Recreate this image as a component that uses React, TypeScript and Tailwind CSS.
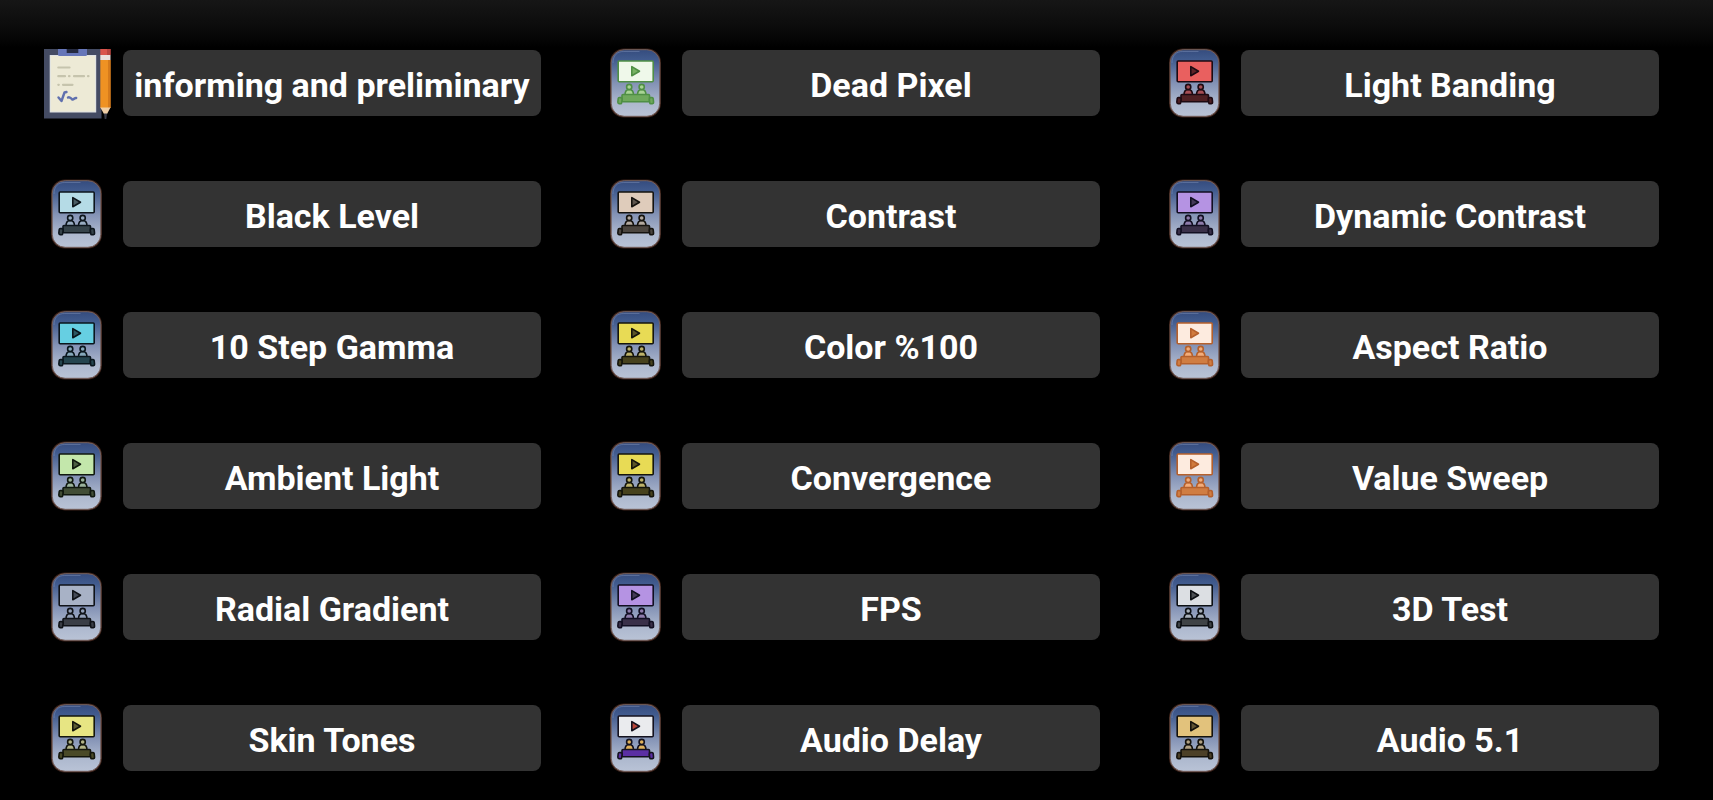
type Palette = {
  line: string;
  screen: string;
  play: string;
  people: string;
  sofa: string;
};

type TestItem = {
  label: string;
  palette?: Palette;
};

const orange: Palette = { line: "#b5602c", screen: "#fdebdf", play: "#d07a3c", people: "#f3ad7a", sofa: "#d07d42" };
const yellow: Palette = { line: "#15150c", screen: "#e8db55", play: "#5b5527", people: "#bdb26a", sofa: "#47421d" };
const purple: Palette = { line: "#120f22", screen: "#b593e3", play: "#453957", people: "#8e7cab", sofa: "#3a3049" };

// Items without a palette get the clipboard icon
const tests: TestItem[] = [
  { label: "informing and preliminary" },
  { label: "Dead Pixel", palette: { line: "#4f8f45", screen: "#eff8ea", play: "#77b263", people: "#a9d494", sofa: "#6fa95c" } },
  { label: "Light Banding", palette: { line: "#1d0a12", screen: "#e9605f", play: "#5e2328", people: "#a64e54", sofa: "#4f2023" } },
  { label: "Black Level", palette: { line: "#0d151c", screen: "#b5dbe6", play: "#4a5c64", people: "#98abc0", sofa: "#36434a" } },
  { label: "Contrast", palette: { line: "#15130f", screen: "#dfccbb", play: "#5d554d", people: "#b3a99f", sofa: "#4b453f" } },
  { label: "Dynamic Contrast", palette: purple },
  { label: "10 Step Gamma", palette: { line: "#0a161d", screen: "#66cfe2", play: "#2b5964", people: "#86a8bb", sofa: "#25454f" } },
  { label: "Color %100", palette: yellow },
  { label: "Aspect Ratio", palette: orange },
  { label: "Ambient Light", palette: { line: "#10180f", screen: "#c3e7ab", play: "#4c5f43", people: "#9bb39c", sofa: "#414d36" } },
  { label: "Convergence", palette: yellow },
  { label: "Value Sweep", palette: orange },
  { label: "Radial Gradient", palette: { line: "#101318", screen: "#a8b2c6", play: "#454b57", people: "#93a0b8", sofa: "#3a3e46" } },
  { label: "FPS", palette: purple },
  { label: "3D Test", palette: { line: "#0d1014", screen: "#dcdfe3", play: "#4c5054", people: "#a8b0ba", sofa: "#3f4346" } },
  { label: "Skin Tones", palette: { line: "#14160c", screen: "#e7e583", play: "#5c5c33", people: "#b3b487", sofa: "#4a4a28" } },
  { label: "Audio Delay", palette: { line: "#14121f", screen: "#eaebee", play: "#b8453a", people: "#e0b25c", sofa: "#5b2fa3" } },
  { label: "Audio 5.1", palette: { line: "#15120c", screen: "#e2c27c", play: "#5f5234", people: "#b3a283", sofa: "#4c4028" } },
];

const TheaterIcon = ({ palette }: { palette: Palette }) => {
  const { line, screen, play, people, sofa } = palette;

  return (
    <svg className="ml-[6px]" width="53" height="70" viewBox="0 0 52 70" fill="none" aria-hidden="true">
      <defs>
        <linearGradient id="theater-bg" x1="0" y1="0" x2="0" y2="1">
          <stop offset="0" stopColor="#354c7e" />
          <stop offset="0.15" stopColor="#415b8e" />
          <stop offset="0.5" stopColor="#8392b5" />
          <stop offset="0.8" stopColor="#adb8ce" />
          <stop offset="1" stopColor="#b9c3d6" />
        </linearGradient>
      </defs>
      <rect x="0.5" y="0.5" width="51" height="69" rx="14" fill="#3a2018" />
      <rect x="1.700" y="1.700" width="48.600" height="66.600" rx="13" fill="url(#theater-bg)" stroke="#75605c" strokeWidth="1" />
      <path d="M3.500 15C3.500 7.500 7.500 3.500 14 3.500H30" stroke="#8b9dc2" strokeOpacity="0.4" strokeWidth="1" />
      <g stroke={line} strokeWidth="1.600" strokeLinejoin="round">
        <rect x="8.700" y="13" width="35" height="20.800" rx="1" fill={screen} />
        <path d="M22.300 18.600V27.800L30 23.200Z" fill={play} />
        <path d="M15.500 47C15.500 43.500 16.800 41.500 19.700 41.500S24 43.500 24 47Z" fill={people} />
        <path d="M28 47C28 43.500 29.300 41.500 32.200 41.500S36.500 43.500 36.500 47Z" fill={people} />
        <circle cx="19.700" cy="39" r="2.600" fill={people} />
        <circle cx="32.200" cy="39" r="2.600" fill={people} />
        <rect x="12.500" y="46.500" width="27.500" height="7.200" rx="1" fill={sofa} />
        <rect x="8.500" y="49.500" width="3.900" height="6.200" rx="1.300" fill={sofa} transform="rotate(6 10.300 52.700)" />
        <rect x="40" y="49.500" width="3.900" height="6.200" rx="1.300" fill={sofa} transform="rotate(-6 42.300 52.700)" />
      </g>
    </svg>
  );
};

const ClipboardIcon = () => (
  <svg width="68" height="72" viewBox="0 -2 68 72" fill="none" aria-hidden="true">
    <rect width="57.500" height="69.500" fill="#444b63" />
    <rect x="5.700" y="6" width="46.500" height="57.500" fill="#dfe2e4" />
    <rect x="6.700" y="7" width="44.500" height="55.500" fill="#edead6" />
    <path d="M14 0H43V5.500Q43 7 41.500 7H15.500Q14 7 14 5.500Z" fill="#6676b8" />
    <rect x="22.700" width="11.600" height="4" fill="#252a40" />
    <g stroke="#c6c4ad" strokeWidth="2.200" strokeLinecap="round">
      <path d="M14.300 18.500H25.500" />
      <path d="M14.300 27.200H21M25 27.200H25.500M30 27.200H40M44 27.200H44.500" />
      <path d="M14.300 35.800H14.800M19 35.800H28.500" />
    </g>
    <path
      d="M14.500 48.500L17.500 52L20.500 43.500L22.500 43M24 48.500C25.500 47.500 26.500 49 28 50.200S30.500 48.500 32.200 49"
      stroke="#6070ae"
      strokeWidth="2.400"
      strokeLinecap="round"
      strokeLinejoin="round"
    />
    <rect x="56.300" width="10.200" height="6" fill="#d9534b" />
    <rect x="63" width="3.500" height="6" fill="#b9443f" />
    <rect x="56.300" y="6" width="10.200" height="5" fill="#eadfdc" />
    <rect x="56.300" y="11" width="10.200" height="48" fill="#ef9223" />
    <rect x="64" y="11" width="2.500" height="48" fill="#d67b1c" />
    <path d="M56.300 58.500H66.500L63 65H60Z" fill="#f0cfa6" />
    <path d="M60 64.500H63L62.300 70H60.700Z" fill="#3a3c48" />
  </svg>
);

const TestRow = ({ label, palette }: TestItem) => (
  <div className="flex h-[72px] items-center gap-[11px]">
    <div className="w-[68px] shrink-0">
      {palette ? <TheaterIcon palette={palette} /> : <ClipboardIcon />}
    </div>
    <button
      type="button"
      className="h-[66px] min-w-0 flex-1 rounded-lg bg-[#333333] pt-1 text-[34px] leading-[40px] font-bold whitespace-nowrap text-white"
    >
      {label}
    </button>
  </div>
);

export default function App() {
  return (
    <main className="min-h-screen bg-black bg-[linear-gradient(to_bottom,#161616_0px,#0b0b0b_28px,#000000_48px)] pt-[47px] pr-[54px] pb-[29px] pl-[44px] font-['Roboto',sans-serif]">
      <div className="grid grid-cols-3 gap-x-[62px] gap-y-[59px]">
        {tests.map((test) => (
          <TestRow key={test.label} {...test} />
        ))}
      </div>
    </main>
  );
}
